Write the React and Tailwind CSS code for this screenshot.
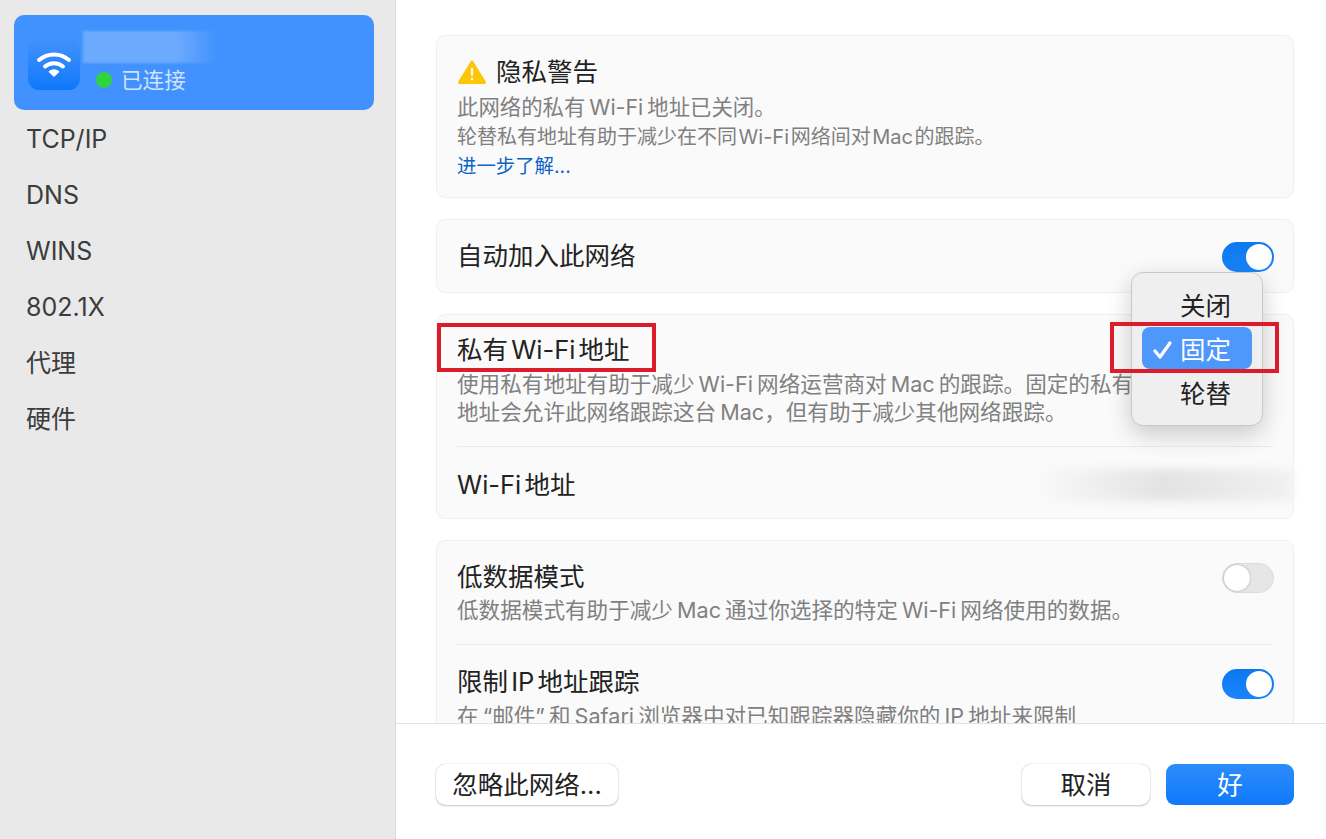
const FONT = "font-['Inter','Noto_Sans_CJK_SC',sans-serif]"
const TITLE = 'text-[25.5px] leading-[32px] text-[#222] [word-spacing:-4px]'
const DESC = 'whitespace-nowrap text-[21.6px] leading-[28px] text-[#808080] [word-spacing:-2px]'

function Toggle({ on }) {
  if (on) {
    return (
      <div className="-mr-px flex h-[30px] w-[52px] shrink-0 justify-end rounded-full bg-gradient-to-b from-[#0a78f0] to-[#1a85fb] p-[2px]">
        <div className="h-[26px] w-[26px] rounded-full bg-white" />
      </div>
    )
  }
  return (
    <div className="-mr-px flex h-[30px] w-[52px] shrink-0 rounded-full border border-[#dcdcdc] bg-[#e6e6e6] p-[1px]">
      <div className="h-[26px] w-[26px] rounded-full bg-white shadow-[0_0_2px_rgba(0,0,0,0.35)]" />
    </div>
  )
}

function Card({ className = '', children }) {
  return (
    <div className={`rounded-[9px] border border-[#efefef] bg-[#fafafa] px-5 ${className}`}>
      {children}
    </div>
  )
}

function SideItem({ children }) {
  return <div className="flex h-14 items-center pl-[26px] text-[25px] leading-none text-[#3c3c3c]">{children}</div>
}

function WifiIcon() {
  return (
    <svg width="36" height="30" viewBox="0 0 36 30" fill="none" stroke="white" strokeLinecap="round">
      <path d="M3 11 C11.5 3.5 24.5 3.5 33 11" strokeWidth="4" />
      <path d="M9 17.5 C14 13 22 13 27 17.5" strokeWidth="4" />
      <path d="M18 27 L13.5 22.6 C16 20.6 20 20.6 22.5 22.6 Z" fill="white" stroke="white" strokeWidth="1.5" strokeLinejoin="round" />
    </svg>
  )
}

function WarnIcon() {
  return (
    <svg width="28" height="25" viewBox="0 0 28 25">
      <path d="M14 2 L26.5 22.5 H1.5 Z" fill="#fdc60a" stroke="#fdc60a" strokeWidth="3" strokeLinejoin="round" />
      <rect x="12.8" y="7.5" width="2.4" height="8.5" rx="1.2" fill="#fff6d0" />
      <circle cx="14" cy="19" r="1.5" fill="#fff6d0" />
    </svg>
  )
}

function FooterButton({ className = '', children }) {
  return (
    <button className={`flex h-[41px] items-center justify-center rounded-[9px] text-[25.5px] leading-none ${className}`}>
      {children}
    </button>
  )
}

export default function App() {
  return (
    <div className={`flex h-[839px] w-[1326px] overflow-hidden bg-white ${FONT}`}>
      <aside className="w-[396px] shrink-0 border-r border-[#d9d9d9] bg-[#e9e9e9] pt-[15px]">
        <div className="mx-[14px] mb-[1px] flex h-[95px] w-[360px] items-start rounded-[10px] bg-[#4192fe] pl-[14px] pt-[16px]">
          <div className="mt-[7px] flex h-[52px] w-[52px] items-center justify-center rounded-[11px] bg-gradient-to-b from-[#4192fe] to-[#0a78fb]">
            <WifiIcon />
          </div>
          <div className="ml-[3px]">
            <div className="h-[32px] w-[134px] bg-gradient-to-r from-[#6caafd] via-[#6caafd] via-70% to-[#4192fe] blur-[1px]" />
            <div className="mt-[4px] flex items-center pl-[13px]">
              <span className="h-4 w-4 rounded-full bg-[#2ed33f]" />
              <span className="ml-[9px] text-[21.6px] leading-[26px] text-[#cfe3ff]">已连接</span>
            </div>
          </div>
        </div>
        <SideItem>TCP/IP</SideItem>
        <SideItem>DNS</SideItem>
        <SideItem>WINS</SideItem>
        <SideItem>802.1X</SideItem>
        <SideItem>代理</SideItem>
        <SideItem>硬件</SideItem>
      </aside>

      <main className="relative flex min-w-0 flex-1 flex-col">
        <div className="h-[724px] shrink-0 overflow-hidden border-b border-[#e3e3e3] pl-10 pr-8 pt-[35px]">
          <Card className="h-[163px] pt-[19px]">
            <div className="flex h-[34px] items-center">
              <span className="ml-px"><WarnIcon /></span>
              <span className="ml-[10px] text-[25.5px] leading-none text-[#222]">隐私警告</span>
            </div>
            <p className="mt-[6px] whitespace-nowrap text-[21.4px] leading-[24px] text-[#808080] [word-spacing:-2px]">此网络的私有 Wi-Fi 地址已关闭。</p>
            <p className="mt-[6px] whitespace-nowrap text-[20px] leading-[24px] text-[#808080] [word-spacing:-4px]">轮替私有地址有助于减少在不同 Wi-Fi 网络间对 Mac 的跟踪。</p>
            <p className="mt-[5px] text-[19.4px] leading-[24px] text-[#0a64c8]">进一步了解...</p>
          </Card>

          <Card className="mt-[21px] flex h-[74px] items-center justify-between">
            <span className="text-[25.5px] leading-none text-[#222]">自动加入此网络</span>
            <div className="pt-[2px]"><Toggle on /></div>
          </Card>

          <Card className="mt-[21px] h-[205px]">
            <div className="h-[132px] border-b border-[#ebebeb] pt-[19px]">
              <div className={TITLE}>私有 Wi-Fi 地址</div>
              <p className={`mt-[4px] ${DESC}`}>
                使用私有地址有助于减少 Wi-Fi 网络运营商对 Mac 的跟踪。固定的私有
                <br />
                地址会允许此网络跟踪这台 Mac，但有助于减少其他网络跟踪。
              </p>
            </div>
            <div className="flex h-[71px] items-center justify-between pt-[5px]">
              <span className={TITLE}>Wi-Fi 地址</span>
              <div className="-mr-[20px] h-8 w-[260px] bg-gradient-to-r from-[#fafafa] via-[#e3e3e3] to-[#f1f1f1] blur-[4px]" />
            </div>
          </Card>

          <Card className="mt-[21px] h-[220px]">
            <div className="flex h-[104px] items-start justify-between border-b border-[#ebebeb] pt-[20px]">
              <div>
                <div className={TITLE}>低数据模式</div>
                <p className={`mt-[3px] ${DESC}`}>低数据模式有助于减少 Mac 通过你选择的特定 Wi-Fi 网络使用的数据。</p>
              </div>
              <div className="pt-[2px]"><Toggle /></div>
            </div>
            <div className="flex items-start justify-between pt-[21px]">
              <div>
                <div className={TITLE}>限制 IP 地址跟踪</div>
                <p className={`mt-[4px] ${DESC}`}>在 “邮件” 和 Safari 浏览器中对已知跟踪器隐藏你的 IP 地址来限制</p>
              </div>
              <div className="pt-[3px]"><Toggle on /></div>
            </div>
          </Card>
        </div>

        <div className="flex flex-1 items-start justify-between pl-10 pr-8 pt-[40px]">
          <FooterButton className="w-[182px] bg-white text-[#222] shadow-[0_0_1px_rgba(0,0,0,0.35),0_1px_2px_rgba(0,0,0,0.2)]">忽略此网络...</FooterButton>
          <div className="flex gap-[16px]">
            <FooterButton className="w-[128px] bg-white text-[#222] shadow-[0_0_1px_rgba(0,0,0,0.35),0_1px_2px_rgba(0,0,0,0.2)]">取消</FooterButton>
            <FooterButton className="w-[128px] bg-gradient-to-b from-[#2b8cfc] to-[#0f79fb] text-white">好</FooterButton>
          </div>
        </div>

        {/* popup menu over the private address row */}
        <div className="absolute left-[735px] top-[272px] flex h-[154px] w-[132px] flex-col rounded-[12px] border border-[#c9c9c9] bg-[#efefef] px-[10px] pt-[12px] shadow-[0_8px_24px_rgba(0,0,0,0.2)]">
          <div className="flex h-[42px] items-center pl-[38px] text-[25.5px] leading-none text-[#222]">关闭</div>
          <div className="flex h-[42px] items-center rounded-[8px] bg-[#4e97fb] pt-[3px] text-[25.5px] leading-none text-white">
            <svg className="ml-[11px] mr-[8px]" width="19" height="20" viewBox="0 0 19 20" fill="none" stroke="white" strokeWidth="3.2" strokeLinecap="round" strokeLinejoin="round">
              <path d="M2 11 L7 17 L17 3" />
            </svg>
            固定
          </div>
          <div className="flex h-[50px] items-center pl-[38px] text-[25.5px] leading-none text-[#222]">轮替</div>
        </div>

        {/* red annotation boxes */}
        <div className="absolute left-[41px] top-[323px] h-[49px] w-[219px] border-4 border-[#dd1c2b]" />
        <div className="absolute left-[714px] top-[322px] h-[51px] w-[169px] border-4 border-[#dd1c2b]" />
      </main>
    </div>
  )
}
